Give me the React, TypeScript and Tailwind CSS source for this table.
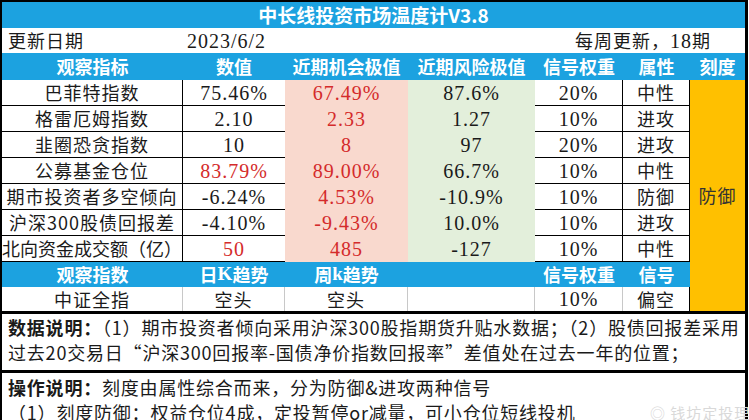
import React from 'react';

const CJK = "font-['Noto_Sans_CJK_SC',sans-serif]";
const NUM = "font-['Liberation_Serif','Noto_Sans_CJK_SC',serif] text-[20px] tracking-[1px]";

interface Row {
  name: string;
  value: string;
  valueRed?: boolean;
  chance: string;
  risk: string;
  weight: string;
  attr: string;
}

const rows: Row[] = [
  { name: '巴菲特指数', value: '75.46%', chance: '67.49%', risk: '87.6%', weight: '20%', attr: '中性' },
  { name: '格雷厄姆指数', value: '2.10', chance: '2.33', risk: '1.27', weight: '10%', attr: '进攻' },
  { name: '韭圈恐贪指数', value: '10', chance: '8', risk: '97', weight: '20%', attr: '进攻' },
  { name: '公募基金仓位', value: '83.79%', valueRed: true, chance: '89.00%', risk: '66.7%', weight: '10%', attr: '中性' },
  { name: '期市投资者多空倾向', value: '-6.24%', chance: '4.53%', risk: '-10.9%', weight: '10%', attr: '防御' },
  { name: '沪深300股债回报差', value: '-4.10%', chance: '-9.43%', risk: '10.0%', weight: '10%', attr: '进攻' },
  { name: '北向资金成交额（亿）', value: '50', valueRed: true, chance: '485', risk: '-127', weight: '10%', attr: '中性' },
];

const cell = 'flex items-center justify-center whitespace-nowrap';
const head = `${cell} bg-[#1ca2e0] text-white font-bold text-[18px] ${CJK}`;

export default function App() {
  return (
    <div className={`w-[749px] h-[420px] overflow-hidden bg-white text-[#1a1a1a] ${CJK}`}>
      <div className="w-[748px] border-t-2 border-l-2 border-r-[3px] border-black">
        <div className="grid grid-cols-[181px_102px_123px_127px_88px_67px_55px] grid-rows-[26px_25px_27px_repeat(7,26px)_25px_24px]">
          {/* title */}
          <div className={`${head} col-span-7 text-[19px]`}>中长线投资市场温度计V3.8</div>

          {/* update row */}
          <div className="col-span-7 flex items-center bg-white text-[18px]">
            <span className="w-[181px] pl-[6px] tracking-[1px]">更新日期</span>
            <span className={`${NUM} pl-[4px]`}>2023/6/2</span>
            <span className="ml-auto mr-[34px] tracking-[1px]">
              每周更新，<span className="font-['Liberation_Serif',serif] text-[20px]">18</span>期
            </span>
          </div>

          {/* header */}
          <div className={head}>观察指标</div>
          <div className={head}>数值</div>
          <div className={head}>近期机会极值</div>
          <div className={head}>近期风险极值</div>
          <div className={head}>信号权重</div>
          <div className={head}>属性</div>
          <div className={head}>刻度</div>

          {rows.map((r, i) => (
            <React.Fragment key={r.name}>
              <div
                className={`${cell} text-[18px] border-r border-b border-black ${
                  i === 6 ? '' : 'tracking-[1px]'
                }`}
                style={{ gridRow: i + 4, gridColumn: 1 }}
              >
                {r.name}
              </div>
              <div
                className={`${cell} ${NUM} border-b border-black ${r.valueRed ? 'text-[#d42b2b]' : ''}`}
                style={{ gridRow: i + 4, gridColumn: 2 }}
              >
                {r.value}
              </div>
              <div
                className={`${cell} ${NUM} bg-[#f9d9ce] text-[#d42b2b]`}
                style={{ gridRow: i + 4, gridColumn: 3 }}
              >
                {r.chance}
              </div>
              <div className={`${cell} ${NUM} bg-[#e3efdb]`} style={{ gridRow: i + 4, gridColumn: 4 }}>
                {r.risk}
              </div>
              <div
                className={`${cell} ${NUM} border-b border-r border-black`}
                style={{ gridRow: i + 4, gridColumn: 5 }}
              >
                {r.weight}
              </div>
              <div
                className={`${cell} text-[18px] tracking-[1px] border-b border-r border-black`}
                style={{ gridRow: i + 4, gridColumn: 6 }}
              >
                {r.attr}
              </div>
            </React.Fragment>
          ))}

          {/* scale column */}
          <div className={`${cell} row-start-4 row-end-[13] col-start-7 bg-[#ffc000] text-[18px] text-[#333] tracking-[1px]`}>
            防御
          </div>

          {/* second header */}
          <div className={`${head} row-start-11 col-start-1`}>观察指数</div>
          <div className={`${head} row-start-11 col-start-2`}>
            日<span className="font-['Liberation_Serif',serif] text-[19px]">K</span>趋势
          </div>
          <div className={`${head} row-start-11 col-start-3`}>
            周<span className="font-['Liberation_Serif',serif] text-[19px]">k</span>趋势
          </div>
          <div className={`${head} row-start-11 col-start-4`} />
          <div className={`${head} row-start-11 col-start-5`}>信号权重</div>
          <div className={`${head} row-start-11 col-start-6`}>信号</div>

          {/* index row */}
          <div className={`${cell} row-start-12 col-start-1 text-[18px] tracking-[1px] border-r border-[#c8c8c8]`}>中证全指</div>
          <div className={`${cell} row-start-12 col-start-2 text-[18px] tracking-[1px] border-r border-[#c8c8c8]`}>空头</div>
          <div className={`${cell} row-start-12 col-start-3 text-[18px] tracking-[1px] border-r border-[#c8c8c8]`}>空头</div>
          <div className={`${cell} row-start-12 col-start-4 border-r border-[#c8c8c8]`} />
          <div className={`${cell} row-start-12 col-start-5 ${NUM} border-r border-[#c8c8c8]`}>10%</div>
          <div className={`${cell} row-start-12 col-start-6 text-[18px] tracking-[1px] border-r border-black`}>偏空</div>
        </div>

        {/* data note */}
        <div className="border-t-[3px] border-black h-[59px] pl-[6px] pt-px text-[18px] leading-[25px] tracking-[0.8px] whitespace-nowrap">
          <div>
            <span className="font-bold">数据说明：</span>（1）期市投资者倾向采用沪深300股指期货升贴水数据；（2）股债回报差采用
          </div>
          <div>过去20交易日“沪深300回报率-国债净价指数回报率”差值处在过去一年的位置；</div>
        </div>

        {/* operation note */}
        <div className="relative border-t-[3px] border-black h-[60px] pl-[6px] pt-[2px] text-[18px] leading-[25px] tracking-[0.8px] whitespace-nowrap">
          <div>
            <span className="font-bold">操作说明：</span>刻度由属性综合而来，分为防御&amp;进攻两种信号
          </div>
          <div>（1）刻度防御：权益仓位4成，定投暂停or减量，可小仓位短线投机</div>
          <span className="absolute left-[648px] top-[27px] text-[15px] text-[#d9d9d9] tracking-[1px]">◎ 钱坊定投理财</span>
        </div>
      </div>
    </div>
  );
}
